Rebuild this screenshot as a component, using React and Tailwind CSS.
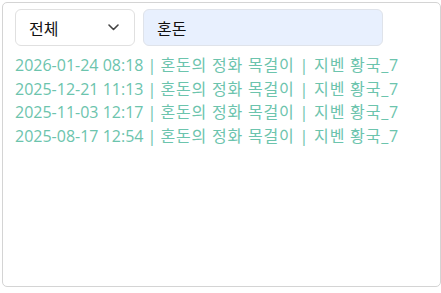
import React, { useState } from "react";

const rows = [
  ["2026-01-24 08:18", "혼돈의 정화 목걸이 | 지벤 황국_7"],
  ["2025-12-21 11:13", "혼돈의 정화 목걸이 | 지벤 황국_7"],
  ["2025-11-03 12:17", "혼돈의 정화 목걸이 | 지벤 황국_7"],
  ["2025-08-17 12:54", "혼돈의 정화 목걸이 | 지벤 황국_7"],
];

const App = () => {
  const [query, setQuery] = useState("혼돈");

  return (
    <div className="w-[441px] h-[293px] bg-white p-[2px] pr-0 font-['Noto_Sans_CJK_KR','Noto_Sans',sans-serif]">
      <div className="h-[285px] border border-[#d4d4d4] rounded-[5px] px-3 pt-[6px]">
        {/* Filters */}
        <div className="flex gap-2">
          <div className="w-[120px] h-[37px] flex items-center justify-between pl-[13px] pr-[15px] border border-[#e0e0e0] rounded-[6px] bg-white text-[16px] text-[#111]">
            <span>전체</span>
            <svg width="11" height="7" viewBox="0 0 11 7" fill="none">
              <path d="M1 1l4.5 4.5L10 1" stroke="#444" strokeWidth="1.6" strokeLinecap="round" strokeLinejoin="round" />
            </svg>
          </div>
          <input
            value={query}
            onChange={(e) => setQuery(e.target.value)}
            className="w-[240px] h-[37px] px-[13px] border border-[#dfe3ea] rounded-[6px] bg-[#e8f0fe] text-[16px] text-[#111] outline-none"
          />
        </div>

        {/* Results */}
        <div className="mt-[8px] text-[16px] leading-[23.7px] text-[#6cc4ad] font-['Open_Sans','Noto_Sans_CJK_KR',sans-serif]">
          {rows.map(([date, rest]) => (
            <div key={date} className="whitespace-nowrap">
              <span>{date} | </span>
              <span className="tracking-[0.8px]">{rest}</span>
            </div>
          ))}
        </div>
      </div>
    </div>
  );
};

export default App;
